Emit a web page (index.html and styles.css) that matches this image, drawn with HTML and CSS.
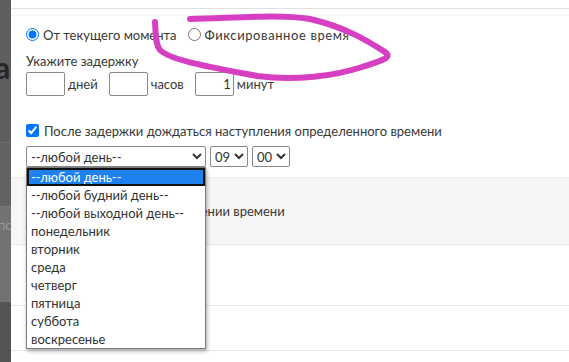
FILE: index.html
```html
<!DOCTYPE html>
<html lang="ru">
<head>
<meta charset="utf-8">
<link rel="stylesheet" href="styles.css">
</head>
<body>
<div class="page">
  <div class="side">
    <div class="side-a"><span class="big">а</span></div>
    <div class="side-b"></div>
    <div class="side-c"><span class="small">пс</span></div>
    <div class="side-d"></div>
  </div>
  <div class="modal">
    <div class="modal-head"></div>
    <div class="modal-sub"></div>
    <div class="form">
      <div class="radio-row">
        <label class="opt"><input type="radio" name="mode" checked><span>От текущего момента</span></label>
        <label class="opt"><input type="radio" name="mode"><span class="wide">Фиксированное время</span></label>
      </div>
      <div class="caption">Укажите задержку</div>
      <div class="delay-row">
        <input class="num" type="text" value=""><span class="unit">дней</span>
        <input class="num" type="text" value=""><span class="unit">часов</span>
        <input class="num" type="text" value="1"><span class="unit">минут</span>
      </div>
      <label class="check-row"><input type="checkbox" checked><span>После задержки дождаться наступления определенного времени</span></label>
      <div class="select-row">
        <div class="select-wrap">
          <select class="sel day"><option>--любой день--</option></select>
          <div class="dropdown">
            <div class="item active">--любой день--</div>
            <div class="item">--любой будний день--</div>
            <div class="item">--любой выходной день--</div>
            <div class="item">понедельник</div>
            <div class="item">вторник</div>
            <div class="item">среда</div>
            <div class="item">четверг</div>
            <div class="item">пятница</div>
            <div class="item">суббота</div>
            <div class="item">воскресенье</div>
          </div>
        </div>
        <select class="sel small-sel"><option>09</option></select>
        <select class="sel small-sel"><option>00</option></select>
      </div>
    </div>
    <div class="row row-gray"><span class="row-text">При наступлении времени</span></div>
    <div class="row row-mid"></div>
    <div class="row row-low"></div>
  </div>
  <svg class="scribble" width="569" height="362" viewBox="0 0 569 362">
    <path d="M155,22 C156,34 155,44 160,50 C170,60 205,66 257,76 C295,81 335,76 362,67 C381,61 393,58 385,52 C368,41 345,27 310,19 C280,14 235,18 190,19" fill="none" stroke="#d63fc2" stroke-width="6" stroke-linecap="round" stroke-linejoin="round"/>
  </svg>
</div>
</body>
</html>
```

FILE: styles.css
```css
* { box-sizing: border-box; }
html, body {
  margin: 0;
  padding: 0;
  width: 569px;
  height: 362px;
  overflow: hidden;
  background: #5c5c5c;
}
body {
  font-family: "Lato", "Open Sans", sans-serif;
  font-size: 13px;
  color: #383838;
}
.page {
  position: relative;
  display: flex;
  width: 569px;
  height: 362px;
}
.side {
  width: 11px;
  flex: none;
  display: flex;
  flex-direction: column;
  overflow: hidden;
}
.side-a {
  height: 142px;
  background: #5e5e5e;
  padding-top: 52px;
}
.big {
  display: block;
  margin-left: -5px;
  font-size: 30px;
  font-weight: 700;
  line-height: 30px;
  color: #262626;
}
.side-b {
  height: 64px;
  background: #626262;
  border-top: 1px solid #6c6c6c;
}
.side-c {
  height: 96px;
  background: #727272;
  border-top: 1px solid #7a7a7a;
  padding-top: 10px;
}
.small {
  display: block;
  margin-left: -2px;
  font-size: 13px;
  color: #9a9a9a;
  white-space: nowrap;
}
.side-d {
  flex: 1;
  background: #545454;
}
.modal {
  flex: 1;
  background: #fff;
  display: flex;
  flex-direction: column;
}
.modal-head {
  height: 9px;
  border-bottom: 1px solid #e0e0e0;
}
.modal-sub {
  height: 7px;
  border-bottom: 1px solid #f4f4f4;
}
.form {
  padding: 12px 0 0 15px;
}
.radio-row {
  display: flex;
  align-items: center;
  height: 13px;
  gap: 11px;
}
.opt {
  display: flex;
  align-items: center;
  gap: 4px;
  white-space: nowrap;
}
.opt input {
  margin: 0;
  width: 13px;
  height: 13px;
}
.wide {
  letter-spacing: 0.6px;
}
.caption {
  margin-top: 12px;
  line-height: 16px;
}
.delay-row {
  display: flex;
  align-items: center;
  margin-top: 3px;
  height: 24px;
}
.num {
  width: 39px;
  height: 24px;
  margin: 0 3px 0 0;
  border: 1px solid #8a8a8a;
  border-radius: 2px;
  font-family: inherit;
  font-size: 13px;
  color: #333;
  text-align: right;
  padding: 0 2px;
}
.unit {
  margin-right: 11px;
}
.check-row {
  display: flex;
  align-items: center;
  gap: 5px;
  margin-top: 28px;
  height: 13px;
  white-space: nowrap;
}
.check-row input {
  margin: 0;
  width: 13px;
  height: 13px;
}
.select-row {
  display: flex;
  gap: 4px;
  margin-top: 9px;
  height: 21px;
}
.select-wrap {
  position: relative;
}
.sel {
  height: 21px;
  margin: 0;
  border: 1px solid #8a8a8a;
  border-radius: 2px;
  background: #fff;
  font-family: inherit;
  font-size: 13px;
  color: #333;
}
.day { width: 180px; }
.small-sel { width: 38px; }
.dropdown {
  position: absolute;
  top: 21px;
  left: 0;
  width: 180px;
  background: #fff;
  border: 1px solid #7a7a7a;
  box-shadow: 1px 2px 4px rgba(0,0,0,0.35);
  z-index: 5;
}
.item {
  height: 18px;
  line-height: 18px;
  padding-left: 4px;
  white-space: nowrap;
  color: #333;
}
.item.active {
  background: #1d82f0;
  color: #fff;
  outline: 2px solid #111;
  outline-offset: -2px;
}
.row {
  border-bottom: 1px solid #e6e6e6;
}
.row-gray {
  margin-top: 10px;
  height: 68px;
  background: #f6f6f6;
  border-top: 1px solid #eeeeee;
  display: flex;
  align-items: center;
  padding-left: 114px;
}
.row-text {
  color: #383838;
}
.row-mid {
  height: 61px;
}
.row-low {
  height: 45px;
}
.scribble {
  position: absolute;
  left: 0;
  top: 0;
  pointer-events: none;
  z-index: 10;
}
```
